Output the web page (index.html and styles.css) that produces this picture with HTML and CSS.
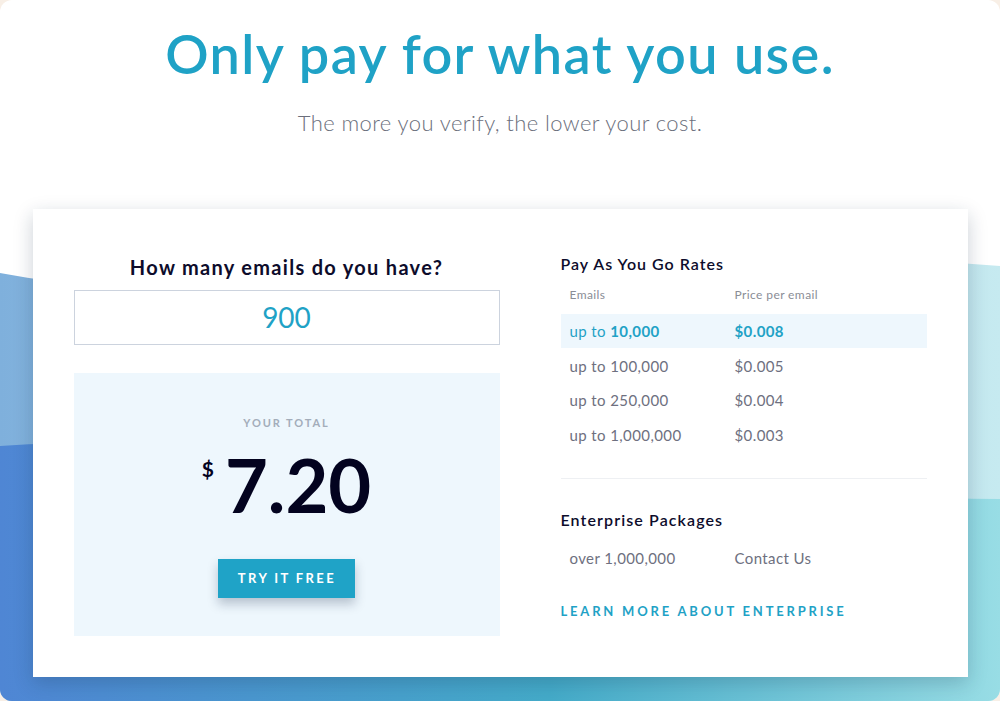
FILE: index.html
```html
<!DOCTYPE html>
<html lang="en">
<head>
<meta charset="utf-8">
<title>Pricing</title>
<link rel="stylesheet" href="styles.css">
</head>
<body>
<div class="frame">
  <svg class="bg" viewBox="0 0 1000 701" preserveAspectRatio="none" aria-hidden="true">
    <defs>
      <linearGradient id="light" x1="0" y1="0" x2="1" y2="0">
        <stop offset="0" stop-color="#7fb0dc"/>
        <stop offset="1" stop-color="#c6eaf0"/>
      </linearGradient>
      <linearGradient id="dark" x1="0" y1="0" x2="1" y2="0">
        <stop offset="0" stop-color="#4f86d4"/>
        <stop offset="0.55" stop-color="#44abc9"/>
        <stop offset="1" stop-color="#98dde5"/>
      </linearGradient>
    </defs>
    <path d="M0,273 C300,330 650,236 1000,266 L1000,701 L0,701 Z" fill="url(#light)"/>
    <path d="M0,446 C300,425 700,498 1000,499 L1000,701 L0,701 Z" fill="url(#dark)"/>
  </svg>

  <header class="hero">
    <h1 class="hero-title">Only pay for what you use.</h1>
    <p class="hero-sub">The more you verify, the lower your cost.</p>
  </header>

  <section class="card">
    <div class="calc">
      <h2 class="calc-title">How many emails do you have?</h2>
      <div class="calc-input">900</div>
      <div class="total">
        <div class="total-label">YOUR TOTAL</div>
        <div class="total-amount"><span class="total-currency">$</span><span class="total-value">7.20</span></div>
        <button class="btn">TRY IT FREE</button>
      </div>
    </div>

    <div class="rates">
      <h3 class="rates-title">Pay As You Go Rates</h3>
      <div class="rate-head">
        <span class="col1">Emails</span>
        <span class="col2">Price per email</span>
      </div>
      <div class="rate-row active">
        <span class="col1">up to <b>10,000</b></span>
        <span class="col2"><b>$0.008</b></span>
      </div>
      <div class="rate-row">
        <span class="col1">up to 100,000</span>
        <span class="col2">$0.005</span>
      </div>
      <div class="rate-row">
        <span class="col1">up to 250,000</span>
        <span class="col2">$0.004</span>
      </div>
      <div class="rate-row">
        <span class="col1">up to 1,000,000</span>
        <span class="col2">$0.003</span>
      </div>
      <hr class="divider">
      <h3 class="rates-title ent">Enterprise Packages</h3>
      <div class="rate-row">
        <span class="col1">over 1,000,000</span>
        <span class="col2">Contact Us</span>
      </div>
      <a class="learn" href="#">LEARN MORE ABOUT ENTERPRISE</a>
    </div>
  </section>
</div>
</body>
</html>
```
FILE: styles.css
```css
html, body {
  margin: 0;
  padding: 0;
  background: #f8efe6;
}
body {
  font-family: "Lato", "Noto Sans", sans-serif;
}
.frame {
  position: relative;
  width: 1000px;
  height: 701px;
  background: #ffffff;
  border-radius: 12px;
  overflow: hidden;
}
.bg {
  position: absolute;
  left: 0;
  top: 0;
  width: 1000px;
  height: 701px;
  z-index: 0;
}
.hero {
  position: relative;
  z-index: 1;
  text-align: center;
  padding-top: 22px;
}
.hero-title {
  margin: 0;
  font-size: 54px;
  line-height: 1.2;
  font-weight: 600;
  letter-spacing: 1.4px;
  color: #1fa2c6;
}
.hero-sub {
  margin: 23px 0 0;
  font-size: 22px;
  line-height: 26px;
  font-weight: 300;
  letter-spacing: 0.4px;
  color: #6b6f7c;
}
.card {
  position: relative;
  z-index: 1;
  box-sizing: border-box;
  width: 935px;
  height: 468px;
  margin: 73px auto 0;
  background: #fff;
  box-shadow: 0 6px 18px rgba(20, 40, 70, 0.22);
  display: flex;
  gap: 61px;
  padding: 0 41px;
}
.calc {
  width: 426px;
  padding-top: 46px;
}
.calc-title {
  margin: 0;
  font-size: 20px;
  line-height: 24px;
  font-weight: 700;
  letter-spacing: 1.3px;
  color: #0d0c2b;
  text-align: center;
}
.calc-input {
  box-sizing: border-box;
  margin-top: 11px;
  height: 55px;
  border: 1px solid #ccd3de;
  display: flex;
  align-items: center;
  justify-content: center;
  font-size: 28px;
  color: #1fa2c6;
}
.total {
  margin-top: 28px;
  height: 263px;
  box-sizing: border-box;
  background: #eef7fd;
  padding-top: 43px;
  display: flex;
  flex-direction: column;
  align-items: center;
}
.total-label {
  font-size: 11px;
  line-height: 14px;
  letter-spacing: 1.9px;
  font-weight: 700;
  color: #a3adba;
}
.total-amount {
  margin-top: 18px;
  display: flex;
  align-items: flex-start;
  gap: 11px;
  color: #03031f;
}
.total-currency {
  font-size: 21px;
  font-weight: 700;
  line-height: 1;
  margin-top: 10px;
}
.total-value {
  font-size: 74px;
  line-height: 1;
  font-weight: 700;
}
.btn {
  margin-top: 37px;
  height: 39px;
  padding: 0 19px 0 20px;
  border: 0;
  background: #1fa3c7;
  color: #fff;
  font-family: inherit;
  font-size: 13px;
  font-weight: 700;
  letter-spacing: 2.4px;
  box-shadow: 0 6px 10px rgba(20, 40, 70, 0.25);
}
.rates {
  width: 366px;
  padding-top: 43px;
}
.rates-title {
  margin: 0;
  font-size: 16px;
  line-height: 24px;
  font-weight: 600;
  letter-spacing: 1px;
  color: #0d0c2b;
}
.rate-head {
  display: flex;
  height: 38px;
  align-items: center;
  font-size: 12px;
  letter-spacing: 0.4px;
  color: #8a8d96;
}
.col1 {
  width: 165px;
  padding-left: 9px;
}
.rate-row {
  display: flex;
  align-items: center;
  height: 34.5px;
  font-size: 15px;
  letter-spacing: 0.4px;
  color: #6e7080;
}
.rate-row.active {
  background: #eef7fd;
  color: #1fa2c6;
}
.rate-row b {
  font-weight: 700;
}
.divider {
  margin: 26px 0 0;
  border: 0;
  border-top: 1px solid #eef0f3;
}
.rates-title.ent {
  margin-top: 29px;
  margin-bottom: 9px;
  letter-spacing: 1.1px;
}
.learn {
  display: block;
  margin-top: 28px;
  font-size: 13px;
  line-height: 16px;
  font-weight: 700;
  letter-spacing: 2.8px;
  color: #1fa2c6;
  text-decoration: none;
}
```
